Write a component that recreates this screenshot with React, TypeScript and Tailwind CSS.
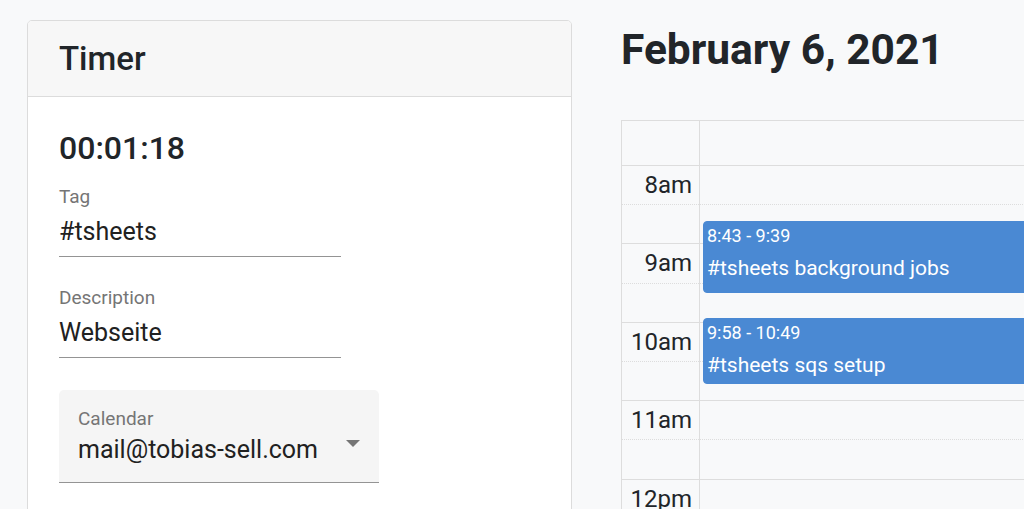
import React from 'react';

type Event = { top: number; height: number; time: string; title: string };

const hours = ['8am', '9am', '10am', '11am', '12pm'];

const events: Event[] = [
  { top: 100, height: 72, time: '8:43 - 9:39', title: '#tsheets background jobs' },
  { top: 197, height: 66, time: '9:58 - 10:49', title: '#tsheets sqs setup' },
];

function TextField({ label, value }: { label: string; value: string }) {
  return (
    <div className="w-[282px]">
      <div className="text-[19px] leading-[24px] text-[#757575]">{label}</div>
      <div className="mt-[7px] pb-[8px] border-b border-[#949494] text-[25px] leading-[32px] text-[#212121]">
        {value}
      </div>
    </div>
  );
}

function TimerCard() {
  return (
    <div className="w-[545px] h-[600px] rounded-[5px] border border-[#dcdcdc] bg-white overflow-hidden">
      {/* Header */}
      <div className="h-[76px] flex items-center px-[31px] bg-[#f7f7f7] border-b border-[#dcdcdc]">
        <h2 className="text-[33px] font-medium text-[#212529]">Timer</h2>
      </div>

      <div className="px-[31px] pt-[31px]">
        <div className="text-[32px] leading-[40px] font-medium text-[#212529]">00:01:18</div>

        <div className="mt-[17px]">
          <TextField label="Tag" value="#tsheets" />
        </div>
        <div className="mt-[29px]">
          <TextField label="Description" value="Webseite" />
        </div>

        {/* Calendar select */}
        <div className="mt-[32px] w-[320px] rounded-t-[5px] bg-[#f5f5f5] border-b border-[#949494] pl-[19px] pr-[19px] pt-[17px] pb-[16px] flex items-end">
          <div className="flex-1">
            <div className="text-[19px] leading-[24px] text-[#757575]">Calendar</div>
            <div className="mt-[3px] text-[25px] leading-[32px] text-[#212121]">mail@tobias-sell.com</div>
          </div>
          <svg width="14" height="7" viewBox="0 0 14 7" className="mb-[19px]">
            <polygon points="0,0 14,0 7,7" fill="#757575" />
          </svg>
        </div>
      </div>
    </div>
  );
}

function DayCalendar() {
  return (
    <div className="w-[560px] shrink-0">
      <h1 className="text-[42.5px] leading-[50px] font-bold text-[#212529] mt-[25px]">February 6, 2021</h1>

      <div className="mt-[45px] border-t border-l border-[#dddddd] flex">
        {/* time column */}
        <div className="w-[78px] shrink-0 border-r border-[#dddddd]">
          <div className="h-[44px]" />
          {hours.map((h) => (
            <div key={h}>
              <div className="h-[39.2px] border-t border-[#dddddd] text-right pr-[7px] pt-[3px] text-[24px] leading-[32px] text-[#212529]">
                {h}
              </div>
              <div className="h-[39.2px] border-t border-dotted border-[#dddddd]" />
            </div>
          ))}
        </div>

        {/* day column */}
        <div className="flex-1 relative">
          <div className="h-[44px]" />
          {hours.map((h) => (
            <div key={h}>
              <div className="h-[39.2px] border-t border-[#dddddd]" />
              <div className="h-[39.2px] border-t border-dotted border-[#dddddd]" />
            </div>
          ))}

          {events.map((e) => (
            <div
              key={e.time}
              className="absolute left-[3px] right-0 rounded-[4px] bg-[#4a89d3] border border-[#4a89d3] text-white pl-[3px] pt-[3px]"
              style={{ top: e.top, height: e.height }}
            >
              <div className="text-[18px] leading-[22px]">{e.time}</div>
              <div className="mt-[7px] text-[21px] leading-[28px]">{e.title}</div>
            </div>
          ))}
        </div>
      </div>
    </div>
  );
}

export default function App() {
  return (
    <div className="w-[1024px] h-[509px] overflow-hidden bg-[#f8f9fa] flex font-['Roboto',sans-serif]">
      <div className="pl-[27px] pt-[20px] shrink-0">
        <TimerCard />
      </div>
      <div className="ml-[49px]">
        <DayCalendar />
      </div>
    </div>
  );
}
